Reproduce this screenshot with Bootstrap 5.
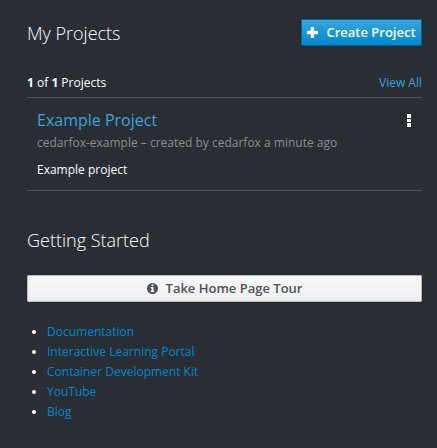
<!DOCTYPE html>
<html lang="en">
<head>
<meta charset="utf-8">
<meta name="viewport" content="width=device-width, initial-scale=1">
<title>My Projects</title>
<link href="https://cdn.jsdelivr.net/npm/bootstrap@5.3.0/dist/css/bootstrap.min.css" rel="stylesheet">
<style>
body{background:#292e34;color:#fff;font:12px/20px "Open Sans",sans-serif;height:448px;overflow:hidden}
.panel{width:395px;margin-left:27px;padding-top:19px}
.title{font-size:18px;font-weight:300;line-height:20px;margin:0}
.btn-pf{--bs-btn-font-size:13px;--bs-btn-line-height:21px;--bs-btn-border-radius:1px;--bs-btn-font-weight:600;height:27px;box-shadow:0 2px 3px rgba(3,3,3,.1)}
.btn-create{--bs-btn-color:#fff;--bs-btn-border-color:#00659c;background-image:linear-gradient(#39a5dc,#0088ce);width:121px}
.btn-tour{--bs-btn-color:#4d5258;--bs-btn-border-color:#bbb;background-image:linear-gradient(#fafafa,#ededed);margin-top:25px}
.count-row{margin-top:27px;height:25px;border-bottom:1px solid #4d5258}
.project{height:93px;padding:12px 11px 0 10px;border-bottom:1px solid #4d5258}
.project-name{font-size:16px;line-height:20px;margin:0;font-weight:400}
a.bright{color:#39a5dc;text-decoration:none}
.meta{color:#8b8d8f;line-height:20px;margin-top:3px}
.desc{margin-top:7px;line-height:20px}
.kebab{width:4px;height:13px;margin-top:4px}
.started{margin-top:39px}
.links{margin:20px 0 0;padding-left:20px}
.links a{color:#0088ce;text-decoration:none}
</style>
</head>
<body>
<main class="panel">
  <header class="d-flex justify-content-between">
    <h1 class="title pt-1">My Projects</h1>
    <button type="button" class="btn btn-pf btn-create d-flex align-items-center justify-content-center p-0 text-nowrap">
      <svg class="me-2" width="11" height="11" viewBox="0 0 11 11" aria-hidden="true"><path fill="#fff" d="M4.500 0h2q.7 0 .7.7v3.100h3.100q.7 0 .7.7v2q0 .7-.7.7H7.200v3.100q0 .7-.7.7h-2q-.7 0-.7-.7V7.200H.7Q0 7.200 0 6.500v-2q0-.7.7-.7h3.100V.7q0-.7.7-.7z"/></svg>
      <span>Create Project</span>
    </button>
  </header>
  <div class="count-row d-flex justify-content-between">
    <span><strong>1</strong> of <strong>1</strong> Projects</span>
    <a href="#" class="bright">View All</a>
  </div>
  <section class="project d-flex justify-content-between">
    <div>
      <h2 class="project-name"><a href="#" class="bright">Example Project</a></h2>
      <div class="meta">cedarfox-example – created by cedarfox a minute ago</div>
      <div class="desc">Example project</div>
    </div>
    <svg class="kebab" viewBox="0 0 4 13" aria-label="Actions"><path fill="#fff" d="M0 0h4v4H0zM0 5h4v3H0zM0 9h4v4H0z"/></svg>
  </section>
  <h2 class="title started">Getting Started</h2>
  <button type="button" class="btn btn-pf btn-tour w-100 d-flex align-items-center justify-content-center p-0">
    <svg class="me-2" width="11" height="11" viewBox="0 0 11 11" aria-hidden="true"><circle cx="5.500" cy="5.500" r="5.500" fill="#4d5258"/><path fill="#f5f5f5" d="M4.500 1.500h2V3h-2zM3.700 4h2.800v3.700h.8V9H3.700V7.700h.8V5.200h-.8z"/></svg>
    <span>Take Home Page Tour</span>
  </button>
  <ul class="links">
    <li><a href="#">Documentation</a></li>
    <li><a href="#">Interactive Learning Portal</a></li>
    <li><a href="#">Container Development Kit</a></li>
    <li><a href="#">YouTube</a></li>
    <li><a href="#">Blog</a></li>
  </ul>
</main>
<script src="https://cdn.jsdelivr.net/npm/bootstrap@5.3.0/dist/js/bootstrap.bundle.min.js"></script>
</body>
</html>
